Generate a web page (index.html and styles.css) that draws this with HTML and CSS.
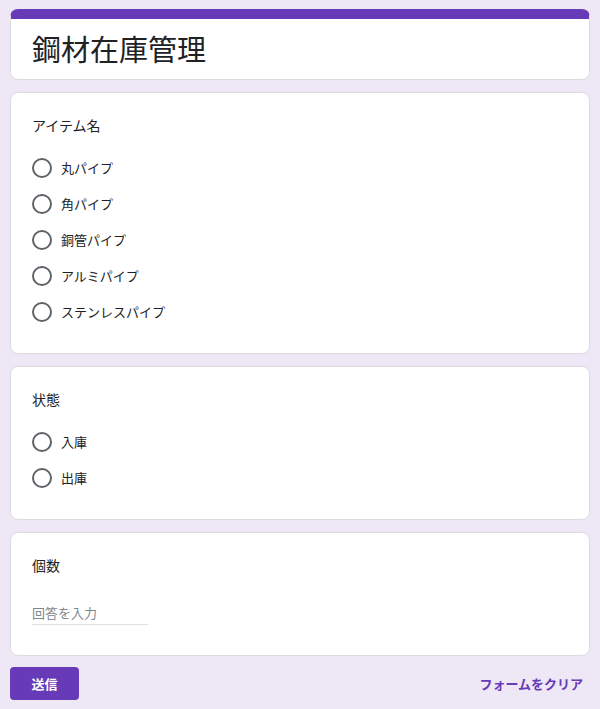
FILE: index.html
```html
<!DOCTYPE html>
<html lang="ja">
<head>
<meta charset="utf-8">
<title>鋼材在庫管理</title>
<link rel="stylesheet" href="styles.css">
</head>
<body>
<form class="form">
  <div class="card header-card">
    <h1 class="form-title">鋼材在庫管理</h1>
  </div>

  <div class="card question">
    <div class="q-title">アイテム名</div>
    <div class="options">
      <label class="option"><input type="radio" name="item" class="radio"><span class="opt-label">丸パイプ</span></label>
      <label class="option"><input type="radio" name="item" class="radio"><span class="opt-label">角パイプ</span></label>
      <label class="option"><input type="radio" name="item" class="radio"><span class="opt-label">銅管パイプ</span></label>
      <label class="option"><input type="radio" name="item" class="radio"><span class="opt-label">アルミパイプ</span></label>
      <label class="option"><input type="radio" name="item" class="radio"><span class="opt-label">ステンレスパイプ</span></label>
    </div>
  </div>

  <div class="card question">
    <div class="q-title">状態</div>
    <div class="options">
      <label class="option"><input type="radio" name="state" class="radio"><span class="opt-label">入庫</span></label>
      <label class="option"><input type="radio" name="state" class="radio"><span class="opt-label">出庫</span></label>
    </div>
  </div>

  <div class="card question text-question">
    <div class="q-title">個数</div>
    <input type="text" class="answer" placeholder="回答を入力">
  </div>

  <div class="actions">
    <button type="button" class="submit">送信</button>
    <button type="reset" class="clear">フォームをクリア</button>
  </div>
</form>
</body>
</html>
```
FILE: styles.css
```css
* { box-sizing: border-box; }

html, body {
  margin: 0;
  padding: 0;
  background: #ede7f6;
}

body {
  font-family: "Noto Sans CJK JP", "Noto Sans", sans-serif;
  color: #202124;
  padding: 9px 10px 0;
}

.form {
  display: flex;
  flex-direction: column;
  gap: 12px;
}

.card {
  background: #fff;
  border: 1px solid #dadce0;
  border-radius: 8px;
}

.header-card {
  border-top: 10px solid #673ab7;
  padding: 10px 21px 12px;
}

.form-title {
  margin: 0;
  font-size: 29px;
  font-weight: 400;
  line-height: 38px;
}

.question {
  padding: 22px 21px 23px;
}

.q-title {
  font-size: 14px;
  font-weight: 400;
  line-height: 20px;
}

.options {
  margin-top: 15px;
  display: flex;
  flex-direction: column;
}

.option {
  height: 36px;
  display: flex;
  align-items: center;
  gap: 9px;
  cursor: pointer;
}

.radio {
  appearance: none;
  -webkit-appearance: none;
  margin: 0;
  width: 20px;
  height: 20px;
  border: 2px solid #5f6368;
  border-radius: 50%;
  flex: none;
}

.opt-label {
  font-size: 13px;
  line-height: 20px;
}

.text-question {
  padding-bottom: 30px;
}

.answer {
  display: block;
  margin-top: 27px;
  width: 116px;
  border: none;
  border-bottom: 1px solid #e0e0e0;
  padding: 0 0 2px;
  font-family: inherit;
  font-size: 13px;
  line-height: 20px;
  height: 23px;
  color: #202124;
  background: transparent;
  outline: none;
}

.answer::placeholder {
  color: #80868b;
}

.actions {
  display: flex;
  justify-content: space-between;
  align-items: center;
  margin-top: -1px;
}

.submit {
  width: 69px;
  height: 33px;
  border: none;
  border-radius: 4px;
  background: #673ab7;
  color: #fff;
  font-family: inherit;
  font-size: 13px;
  font-weight: 700;
  cursor: pointer;
}

.clear {
  border: none;
  background: transparent;
  color: #673ab7;
  font-family: inherit;
  font-size: 13px;
  font-weight: 700;
  padding: 0 7px 0 0;
  cursor: pointer;
}
```
